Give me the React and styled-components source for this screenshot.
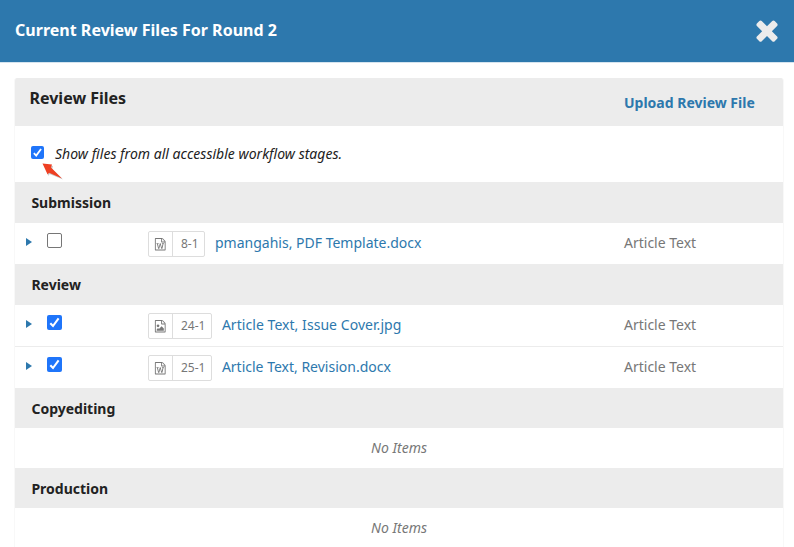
import React from "react";
import styled, { createGlobalStyle } from "styled-components";

const GlobalStyle = createGlobalStyle`
  * { box-sizing: border-box; }
  body {
    margin: 0;
    background: #fff;
    color: #222;
    font-family: "Noto Sans", sans-serif;
    font-size: 14px;
    overflow: hidden;
  }
`;

const Modal = styled.div`
  height: 547px;
  overflow: hidden;
`;

const ModalHeader = styled.header`
  display: flex;
  align-items: center;
  justify-content: space-between;
  height: 63px;
  padding: 0 11px 2px 15px;
  background: #2d78ad;
  border-bottom: 1px solid #d5e4ef;
  color: #fff;
`;

const ModalTitle = styled.h1`
  margin: 0;
  font-size: 16px;
  font-weight: 700;
  letter-spacing: 0.02px;
  line-height: 24px;
`;

const CloseButton = styled.button`
  display: flex;
  padding: 0;
  border: 0;
  background: none;
  color: #ececec;
`;

const Panel = styled.section`
  margin: 15px 10px 0 14px;
  border: 1px solid #f8f8f8;
  border-top: 0;
  border-radius: 3px 3px 0 0;
  height: 500px;
  overflow: hidden;
`;

const PanelHeader = styled.div`
  display: grid;
  grid-template-columns: 609px 1fr;
  height: 48px;
  background: #ececec;
`;

const PanelTitle = styled.h2`
  margin: 0;
  padding: 9px 0 0 14.5px;
  font-size: 16px;
  font-weight: 700;
  line-height: 22px;
`;

const UploadLink = styled.a`
  padding-top: 15px;
  color: #2d78ad;
  font-weight: 700;
  line-height: 20px;
`;

const FilterRow = styled.div`
  position: relative;
  display: flex;
  align-items: flex-start;
  gap: 11px;
  height: 56px;
  padding: 20px 0 0 16px;
  font-style: italic;
  letter-spacing: 0.02px;
  line-height: 16px;
`;

const Pointer = styled.svg`
  position: absolute;
  left: 25px;
  top: 36px;
`;

const GroupTitle = styled.h3`
  margin: 0;
  height: ${(p) => p.$height}px;
  padding-left: 16.4px;
  background: #ececec;
  font-size: 14px;
  font-weight: 700;
  line-height: 41px;
`;

const FileRow = styled.div`
  display: grid;
  grid-template-columns: 32px 101px 476px 1fr;
  height: ${(p) => (p.$divided ? 42 : 41)}px;
  border-top: ${(p) => (p.$divided ? "1px solid #ececec" : "0")};
`;

const Expander = styled.svg`
  margin: 15px 0 0 11px;
`;

const CheckCell = styled.div`
  padding-top: 10px;
`;

const Box = styled.span`
  display: flex;
  flex: none;
  width: ${(p) => p.$size}px;
  height: ${(p) => p.$size}px;
  border: ${(p) => (p.$checked ? "0" : "1px solid #767676")};
  border-radius: 2px;
  background: ${(p) => (p.$checked ? "#1f75fa" : "#fff")};
`;

const FileCell = styled.div`
  display: flex;
  align-items: flex-start;
  gap: 10px;
  padding-top: 8px;
`;

const FileTag = styled.div`
  display: flex;
  height: 26px;
  border: 1px solid #ddd;
  border-radius: 2px;
  color: #777;
  font-size: 12px;
  line-height: 24px;
`;

const TagIcon = styled.span`
  display: flex;
  justify-content: center;
  width: 24px;
  padding-top: 6px;
  border-right: 1px solid #ddd;
`;

const TagId = styled.span`
  padding: 0 6px 0 8px;
  margin-right: -0.6px;
`;

const FileLink = styled.a`
  color: #2d78ad;
  letter-spacing: ${(p) => (p.$wide ? "0.05px" : "0")};
  line-height: 24px;
`;

const FileType = styled.div`
  padding-top: 8px;
  color: #777;
  line-height: 24px;
`;

const Empty = styled.div`
  height: 40px;
  color: #777;
  font-style: italic;
  line-height: 40px;
  text-align: center;
`;

const sheet =
  "M1596 380q28 28 48 76t20 88v1152q0 40-28 68t-68 28h-1344q-40 0-68-28t-28-68v-1600q0-40 28-68t68-28h896q40 0 88 20t76 48zm-444-244v376h376q-10-29-22-41l-313-313q-12-12-41-22zm384 1528v-1024h-416q-40 0-68-28t-28-68v-416h-768v1536h1280z";
const marks = {
  word: "M361 768v107h70l164 661h159l128-485q7-20 10-46 2-16 2-24h4l3 24q1 3 3.5 20t5.5 26l128 485h159l164-661h70v-107h-300v107h90l-99 438q-5 20-7 46l-2 21h-4l-3-21q-1-5-4-21t-5-25l-144-545h-114l-144 545q-2 9-4.5 24.5t-3.5 21.5l-4 21h-4l-2-21q-2-26-7-46l-99-438h90v-107h-300z",
  image:
    "M1408 1216v320h-1024v-192l192-192 128 128 384-384zM576 1024q-80 0-136-56t-56-136 56-136 136-56 136 56 56 136-56 136-136 56z",
};

function DocIcon({ kind }) {
  return (
    <svg width="12.5" height="12.5" viewBox="0 0 1792 1792" fill="currentColor">
      <path d={sheet} />
      <path d={marks[kind]} />
    </svg>
  );
}

function Checkbox({ checked, size = 15 }) {
  return (
    <Box $checked={checked} $size={size} role="checkbox" aria-checked={checked}>
      {checked && (
        <svg width={size} height={size} viewBox="0 0 15 15" fill="none">
          <path d="M3.3 8.2 6 11 11.6 3.4" stroke="#fff" strokeWidth="2.1" />
        </svg>
      )}
    </Box>
  );
}

function File({ kind, id, name, checked, divided }) {
  return (
    <FileRow $divided={divided}>
      <Expander width="6" height="8" viewBox="0 0 6 8">
        <path d="M0 0 6 4 0 8z" fill="#2d78ad" />
      </Expander>
      <CheckCell>
        <Checkbox checked={checked} />
      </CheckCell>
      <FileCell>
        <FileTag>
          <TagIcon>
            <DocIcon kind={kind} />
          </TagIcon>
          <TagId>{id}</TagId>
        </FileTag>
        <FileLink $wide={kind === "image"}>{name}</FileLink>
      </FileCell>
      <FileType>Article Text</FileType>
    </FileRow>
  );
}

export default function App() {
  return (
    <Modal>
      <GlobalStyle />
      <ModalHeader>
        <ModalTitle>Current Review Files For Round 2</ModalTitle>
        <CloseButton aria-label="Close">
          <svg width="32" height="32" viewBox="0 0 1792 1792" fill="currentColor">
            <path d="M1490 1322q0 40-28 68l-136 136q-28 28-68 28t-68-28l-294-294-294 294q-28 28-68 28t-68-28l-136-136q-28-28-28-68t28-68l294-294-294-294q-28-28-28-68t28-68l136-136q28-28 68-28t68 28l294 294 294-294q28-28 68-28t68 28l136 136q28 28 28 68t-28 68l-294 294 294 294q28 28 28 68z" />
          </svg>
        </CloseButton>
      </ModalHeader>
      <Panel>
        <PanelHeader>
          <PanelTitle>Review Files</PanelTitle>
          <UploadLink>Upload Review File</UploadLink>
        </PanelHeader>
        <FilterRow>
          <Checkbox checked size={13} />
          <span>Show files from all accessible workflow stages.</span>
          <Pointer width="26" height="20" viewBox="0 0 26 20">
            <path d="M5 3 13 4 12.2 7 23 17.5 9.5 12 8.5 14z" fill="#777" opacity=".4" />
            <path d="M2.5 1.5 12 2.5 11 5.4 22 16.5 9 10.8 7.6 12.5z" fill="#ee4023" />
          </Pointer>
        </FilterRow>
        <GroupTitle $height={41}>Submission</GroupTitle>
        <File kind="word" id="8-1" name="pmangahis, PDF Template.docx" checked={false} />
        <GroupTitle $height={41}>Review</GroupTitle>
        <File kind="image" id="24-1" name="Article Text, Issue Cover.jpg" checked />
        <File kind="word" id="25-1" name="Article Text, Revision.docx" checked divided />
        <GroupTitle $height={40}>Copyediting</GroupTitle>
        <Empty>No Items</Empty>
        <GroupTitle $height={40}>Production</GroupTitle>
        <Empty>No Items</Empty>
      </Panel>
    </Modal>
  );
}
